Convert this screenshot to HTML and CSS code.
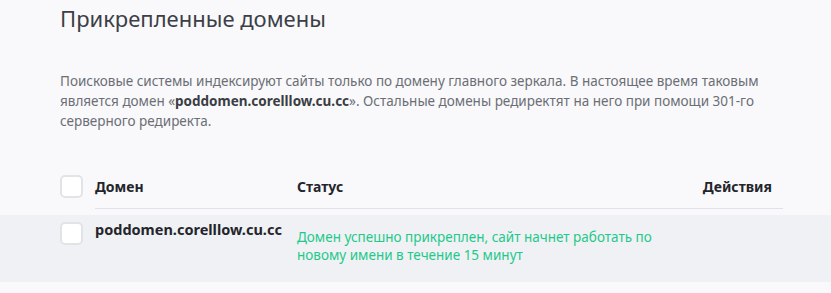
FILE: index.html
```html
<!DOCTYPE html>
<html lang="ru">
<head>
    <meta charset="UTF-8">
    <meta name="viewport" content="width=device-width, initial-scale=1.0">
    <title>Прикрепленные домены</title>
    <link rel="stylesheet" href="styles.css">
</head>
<body>
    <div class="container">
        <h1>Прикрепленные домены</h1>
        <p class="note">
            Поисковые системы индексируют сайты только по домену главного зеркала. В настоящее время таковым
            является домен «<b>poddomen.corelllow.cu.cc</b>». Остальные домены редиректят на него при помощи 301-го
            серверного редиректа.
        </p>
    </div>
    <div class="domains">
        <div class="row head">
            <span class="check"></span>
            <span class="col-domain">Домен</span>
            <span class="col-status">Статус</span>
            <span class="col-actions">Действия</span>
        </div>
        <div class="row-wrap">
            <div class="row item">
                <span class="check"></span>
                <span class="col-domain">poddomen.corelllow.cu.cc</span>
                <span class="col-status ok">Домен успешно прикреплен, сайт начнет работать по новому имени в течение 15 минут</span>
                <span class="col-actions"></span>
            </div>
        </div>
    </div>
</body>
</html>
```

FILE: styles.css
```css
body {
    margin: 0;
    background: #f9f9fb;
    font-family: "Noto Sans", "Open Sans", sans-serif;
    color: #333;
}
.container {
    padding: 0 48px 0 60px;
}
h1 {
    margin: 0;
    padding-top: 3px;
    font-size: 22px;
    font-weight: 400;
    line-height: 30px;
    color: #3c3f47;
}
.note {
    margin: 38px 0 0;
    font-size: 13.5px;
    line-height: 20px;
    color: #6b6e75;
    width: 730px;
}
.note b {
    color: #3a3d44;
}
.domains {
    margin-top: 43px;
}
.row {
    display: grid;
    grid-template-columns: 35px 202px 1fr 100px;
    margin: 0 48px 0 60px;
}
.check {
    width: 19px;
    height: 19px;
    border: 2px solid #e2e3e7;
    border-radius: 5px;
    background: #fff;
}
.head {
    align-items: start;
    height: 35px;
    font-weight: 700;
    font-size: 14px;
    color: #23252b;
}
.head .check {
    margin-top: 1px;
}
.head .col-domain,
.head .col-status,
.head .col-actions {
    border-bottom: 1px solid #e1e2e8;
    height: 35px;
    line-height: 24px;
    padding-top: 1px;
    box-sizing: border-box;
}
.head .col-actions {
    text-align: right;
    padding-right: 11px;
}
.row-wrap {
    margin-top: 6px;
    background: #f0f1f4;
    padding: 7px 0 18px;
}
.item .col-domain {
    font-weight: 700;
    font-size: 14.5px;
    color: #23252b;
    line-height: 14px;
}
.ok {
    color: #1ec98b;
    font-size: 13.5px;
    line-height: 18px;
    padding-top: 6px;
    max-width: 372px;
}
```
